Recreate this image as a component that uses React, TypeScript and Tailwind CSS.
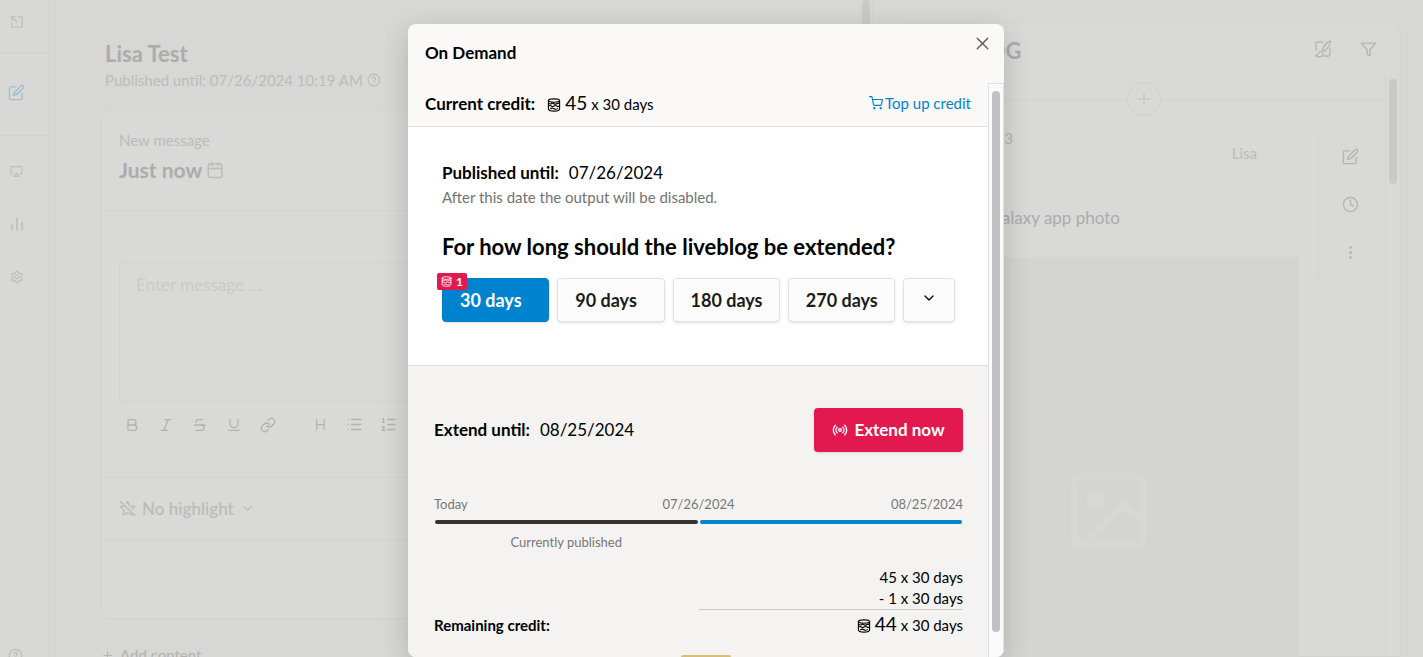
import type { ReactNode } from "react";
import {
  FiAirplay,
  FiCalendar,
  FiClock,
  FiEdit,
  FiFilter,
  FiHelpCircle,
  FiImage,
  FiLink,
  FiPlus,
  FiShoppingCart,
} from "react-icons/fi";
import {
  Bold,
  ChevronDown,
  Heading,
  Italic,
  List,
  ListOrdered,
  MoreVertical,
  Radio,
  Settings,
  SquareArrowOutUpLeft,
  StarOff,
  Strikethrough,
  Underline,
  X,
} from "lucide-react";

const durations = [
  { label: "30 days", credits: 1, active: true },
  { label: "90 days", credits: 3, active: false },
  { label: "180 days", credits: 6, active: false },
  { label: "270 days", credits: 9, active: false },
];

function CreditIcon({ size = 14 }: { size?: number }) {
  return (
    <svg width={size} height={size} viewBox="0 0 14 14" fill="none" stroke="currentColor" strokeWidth="1.1" strokeLinecap="round" strokeLinejoin="round">
      <ellipse cx="7" cy="2.6" rx="5.6" ry="1.7" />
      <path d="M1.4 2.6v8.200c0 1.400 1.900 2.300 5.600 2.300s5.600-.9 5.600-2.300V2.600" />
      <path d="M1.600 5.200c.9.900 1.800 1.100 2.700.5s1.800-.7 2.700 0 1.800.6 2.700 0 1.800-.6 2.700-.5" />
      <path d="M1.600 8c.9-.6 1.800-.6 2.700 0s1.800.6 2.700 0 1.800-.6 2.700 0 1.800.6 2.700 0" />
      <path d="M3.600 10.700c1.100-.8 2.300-.7 3.400 0s2.300.7 3.400-.1" />
    </svg>
  );
}

function BarsIcon() {
  return (
    <svg width="14" height="14" viewBox="0 0 14 14" stroke="currentColor" strokeWidth="1.5" strokeLinecap="round">
      <path d="M2 8v5M7 1v12M12 5v8" />
    </svg>
  );
}

function BrushIcon() {
  return (
    <svg width="18" height="18" viewBox="0 0 18 18" fill="none" stroke="currentColor" strokeWidth="1.3" strokeLinecap="round" strokeLinejoin="round">
      <path d="M9 2H3.500A1.500 1.500 0 0 0 2 3.500V10M16 8v6.500a1.500 1.500 0 0 1-1.500 1.500H10" />
      <path d="M16.500 1c-2.800.6-6 4-8.200 8.800l1.900 1.500C13.800 8 16.500 4.200 16.500 1z" />
      <path d="M7.500 11.500c-1.700-.4-3 .5-3.200 2-.2 1.300-1.300 2-2.800 2 2.500 2.300 7.500 1.700 7.500-1.500 0-1.200-.6-2.200-1.500-2.500z" />
    </svg>
  );
}

function ToolButton({ label, children }: { label: string; children: ReactNode }) {
  return (
    <button type="button" aria-label={label} className="flex w-[34px] shrink-0 justify-center">
      {children}
    </button>
  );
}

function Sidebar() {
  return (
    <nav className="flex w-[49px] shrink-0 flex-col border-r border-[#d2d2d0] bg-[#d8d8d6] text-[#bcbcba]">
      <a href="#open" aria-label="Open" className="flex h-[53px] items-center border-b border-[#d2d2d0] pr-4 pb-2 pl-2.5">
        <SquareArrowOutUpLeft size={14} />
      </a>
      <a href="#editor" aria-label="Editor" className="flex h-[83px] items-center border-b border-[#d2d2d0] pb-1 pl-2 text-[#a3bfcd]">
        <FiEdit size={17} />
      </a>
      <div className="flex flex-col gap-[39px] pt-[29px] pl-2.5">
        <a href="#output" aria-label="Output"><FiAirplay size={13} /></a>
        <a href="#statistics" aria-label="Statistics"><BarsIcon /></a>
        <a href="#settings" aria-label="Settings"><Settings size={14} /></a>
      </div>
      <a href="#help" aria-label="Help" className="mt-auto -mb-1.5 pl-2">
        <FiHelpCircle size={15} />
      </a>
    </nav>
  );
}

function Editor() {
  return (
    <main className="flex min-w-0 overflow-hidden">
      <div className="min-w-0 flex-1 pt-10 pr-7 pl-[52px]">
        <header className="pl-1">
          <h1 className="text-[22px] leading-7 font-bold text-[#acacab]">Lisa Test</h1>
          <p className="flex items-center gap-1 text-[15px] leading-6 text-[#bcbcba]">
            Published until: 07/26/2024 10:19 AM <FiHelpCircle size={14} />
          </p>
        </header>
        <section className="mt-[18px] h-[509px] rounded-lg border border-[#d2d2d0] bg-[#d9d9d7]">
          <div className="h-[100px] border-b border-[#d2d2d0] px-[17px] pt-[17px]">
            <p className="text-[15px] leading-6 text-[#bcbcba]">New message</p>
            <div className="flex items-center gap-1 text-[#bcbcba]">
              <span className="text-[21px] leading-9 font-bold text-[#acacab]">Just now</span>
              <FiCalendar size={18} />
            </div>
          </div>
          <div className="h-[267px] border-b border-[#d2d2d0] px-[17px] pt-[51px]">
            <textarea
              aria-label="Message"
              placeholder="Enter message …"
              className="block h-[140px] w-full resize-none rounded border border-[#d2d2d0] px-4 py-2.5 text-[17px] leading-6 placeholder:text-[#cbcbc9]"
            />
            <div className="-ml-1 flex items-center pt-3.5 text-[#b2b2b0]">
              <ToolButton label="Bold"><Bold size={16} /></ToolButton>
              <ToolButton label="Italic"><Italic size={16} /></ToolButton>
              <ToolButton label="Strikethrough"><Strikethrough size={16} /></ToolButton>
              <ToolButton label="Underline"><Underline size={16} /></ToolButton>
              <ToolButton label="Link"><FiLink size={16} /></ToolButton>
              <span className="w-[18px] shrink-0" />
              <ToolButton label="Heading"><Heading size={15} /></ToolButton>
              <ToolButton label="Bulleted list"><List size={17} /></ToolButton>
              <ToolButton label="Numbered list"><ListOrdered size={17} /></ToolButton>
            </div>
          </div>
          <div className="flex h-[62px] items-center border-b border-[#d2d2d0] px-[17px]">
            <button type="button" className="flex items-center gap-1.5 text-[17px] leading-6 font-semibold text-[#bcbcba]">
              <StarOff size={17} />
              No highlight
              <ChevronDown size={15} />
            </button>
          </div>
        </section>
        <button type="button" className="mt-6 flex items-center gap-1.5 text-[15px] leading-6 text-[#b2b2b0]">
          <FiPlus size={13} />
          Add content
        </button>
      </div>
      <div className="flex w-3.5 shrink-0 justify-center border-x border-[#d3d3d1]">
        <div className="h-24 w-2 rounded-full bg-[#c9c9c8]" />
      </div>
    </main>
  );
}

function Timeline() {
  return (
    <aside className="flex min-w-0 overflow-hidden pt-[22px] pr-[22px] pl-7">
      <div className="flex min-w-0 flex-1 flex-col rounded-t-lg border border-[#d2d2d0] bg-[#d9d9d7]">
        <header className="flex h-[52px] shrink-0 items-center pr-[23px] pl-3.5 text-[#b5b5b3]">
          <h2 className="mt-1 text-[22px] leading-7 font-bold text-[#acacab]">LIVEBLOG</h2>
          <button type="button" aria-label="Design" className="ml-auto"><BrushIcon /></button>
          <button type="button" aria-label="Filter" className="ml-7"><FiFilter size={17} /></button>
        </header>
        <div className="flex min-h-0 flex-1">
          <div className="min-w-0 flex-1">
            <div className="flex items-center pt-[7px]">
              <span className="h-px flex-1 bg-[#d2d2d0]" />
              <button type="button" aria-label="Add message" className="flex size-[34px] items-center justify-center rounded-full border border-[#d0d0ce] text-[#c6c6c4]">
                <FiPlus size={18} />
              </button>
              <span className="h-px flex-1 bg-[#d2d2d0]" />
            </div>
            <article className="flex pt-[18px] pl-4">
              <div className="min-w-0 flex-1 pr-[19px]">
                <div className="flex h-10 justify-between pr-[42px]">
                  <span className="-mt-2 text-[15px] leading-6 text-[#b5b5b3]">Message no. 3</span>
                  <span className="self-end text-[15px] leading-[42px] text-[#bcbcba]">Lisa</span>
                </div>
                <p className="pt-8 text-[17px] leading-6 text-[#acacab]">Samsung Galaxy app photo</p>
                <div className="mt-[27px] flex h-[508px] items-center justify-center bg-[#d4d4d2] text-[#d7d7d5]">
                  <FiImage size={91} />
                </div>
              </div>
              <div className="flex h-36 w-[67px] shrink-0 flex-col items-center gap-[31px] border-l border-[#d2d2d0] pt-3.5 pr-[3px] text-[#b5b5b3]">
                <button type="button" aria-label="Edit"><FiEdit size={17} /></button>
                <button type="button" aria-label="History"><FiClock size={17} /></button>
                <button type="button" aria-label="More"><MoreVertical size={17} /></button>
              </div>
            </article>
          </div>
          <div className="flex w-[15px] shrink-0 justify-center border-l border-[#d2d2d0] pt-1">
            <div className="h-[105px] w-2 rounded-full bg-[#c9c9c8]" />
          </div>
        </div>
      </div>
    </aside>
  );
}

function OnDemandDialog() {
  return (
    <div className="absolute inset-0 flex justify-center pt-6 pr-[11px]">
      <div role="dialog" aria-labelledby="dialog-title" className="flex h-full w-full max-w-[596px] flex-col overflow-hidden rounded-lg bg-[#faf9f8] text-black shadow-[0_8px_28px_rgba(0,0,0,0.18)]">
        <header className="flex h-[59px] shrink-0 items-start justify-between pt-[9px] pr-[11px] pl-[17px]">
          <h2 id="dialog-title" className="pt-2 text-[17px] leading-6 font-bold">On Demand</h2>
          <button type="button" aria-label="Close" className="text-[#666]"><X size={21} strokeWidth={1.75} /></button>
        </header>
        <div className="flex min-h-0 flex-1">
          <div className="min-w-0 flex-1 overflow-hidden">
            <div className="flex h-11 items-baseline border-b border-[#dededd] px-[17px] pt-2">
              <span className="text-[17px] leading-6 font-bold">Current credit:</span>
              <span className="flex items-baseline gap-1 pl-3 text-[15px] leading-6">
                <span className="self-center pt-0.5"><CreditIcon /></span>
                <span className="text-[19px] leading-6">45</span> x 30 days
              </span>
              <a href="#top-up" className="ml-auto flex items-center gap-0.5 text-[15px] leading-6 text-[#0083ce]">
                <FiShoppingCart size={14} />
                Top up credit
              </a>
            </div>
            <div className="h-[239px] border-b border-[#dededd] bg-white pt-[34px] pr-[33px] pl-[34px]">
              <p className="flex items-baseline gap-2.5 text-[17px] leading-6">
                <strong>Published until:</strong> 07/26/2024
              </p>
              <p className="text-[15px] leading-6 text-[#737373]">After this date the output will be disabled.</p>
              <h3 className="pt-[22px] text-[22px] leading-8 font-bold">For how long should the liveblog be extended?</h3>
              <div className="flex gap-2 pt-[15px]">
                {durations.map((d) => (
                  <button
                    key={d.label}
                    type="button"
                    className={
                      d.active
                        ? "relative h-11 flex-1 rounded border border-[#007cc5] bg-[#0083ce] pl-[17px] text-left text-[18px] font-bold text-white shadow-sm"
                        : "h-11 flex-1 rounded border border-[#e2e2e2] bg-[#fcfcfc] pl-[17px] text-left text-[18px] font-bold text-[#1c1c1c] shadow-sm"
                    }
                  >
                    {d.active && (
                      <span className="absolute -top-1.5 -left-1.5 flex h-[17px] items-center gap-1 rounded-xs bg-[#e2194f] px-1 text-[12px]">
                        <CreditIcon size={11} />
                        {d.credits}
                      </span>
                    )}
                    {d.label}
                  </button>
                ))}
                <button type="button" aria-label="More durations" className="flex h-11 w-[52px] justify-center rounded border border-[#e2e2e2] bg-[#fcfcfc] pt-[11px] shadow-sm">
                  <ChevronDown size={16} />
                </button>
              </div>
            </div>
            <div className="h-full bg-[#f4f3f2] pt-[42px] pr-[25px] pl-[26px]">
              <div className="flex items-center justify-between">
                <p className="flex items-baseline gap-2.5 text-[17px] leading-6">
                  <strong>Extend until:</strong> 08/25/2024
                </p>
                <button type="button" className="flex h-11 w-[149px] items-center justify-center gap-1.5 rounded bg-[#e2194f] text-[17px] font-bold text-white shadow-sm">
                  <Radio size={16} />
                  Extend now
                </button>
              </div>
              <div className="grid grid-cols-3 pt-[42px] text-[13px] leading-5 text-[#777]">
                <span>Today</span>
                <span className="text-center">07/26/2024</span>
                <span className="text-right">08/25/2024</span>
              </div>
              <div className="grid grid-cols-2 gap-0.5 px-px pt-1.5">
                <span className="h-1 rounded-full bg-[#333]" />
                <span className="h-1 rounded-full bg-[#0083ce]" />
                <span className="pt-1.5 text-center text-[13px] leading-5 text-[#777]">Currently published</span>
              </div>
              <div className="ml-auto w-1/2 border-b border-[#ccc] pt-[15px] text-right text-[15px] leading-[21px]">
                <p>45 x 30 days</p>
                <p>- 1 x 30 days</p>
              </div>
              <div className="flex items-baseline justify-between pt-0.5 text-[15px] leading-6">
                <strong>Remaining credit:</strong>
                <span className="flex items-baseline gap-1">
                  <span className="self-center pt-0.5"><CreditIcon /></span>
                  <span className="text-[19px] leading-6">44</span> x 30 days
                </span>
              </div>
            </div>
          </div>
          <div className="flex w-4 shrink-0 justify-center border-x border-t border-[#e0e0e0] bg-[#fafafa] pt-[7px] pb-[25px]">
            <div className="w-2 rounded-full bg-[#c1c1c1]" />
          </div>
        </div>
      </div>
      <div className="absolute inset-x-0 bottom-0 flex justify-center pr-[11px]">
        <div className="h-0.5 w-[50px] rounded-t-xs bg-[#d9bd72]" />
      </div>
    </div>
  );
}

export default function App() {
  return (
    <div className="relative flex h-screen overflow-hidden bg-[#d7d7d5] font-['Lato',sans-serif]">
      <Sidebar />
      <div className="grid min-w-0 flex-1 grid-cols-[3fr_2fr]">
        <Editor />
        <Timeline />
      </div>
      <OnDemandDialog />
    </div>
  );
}
